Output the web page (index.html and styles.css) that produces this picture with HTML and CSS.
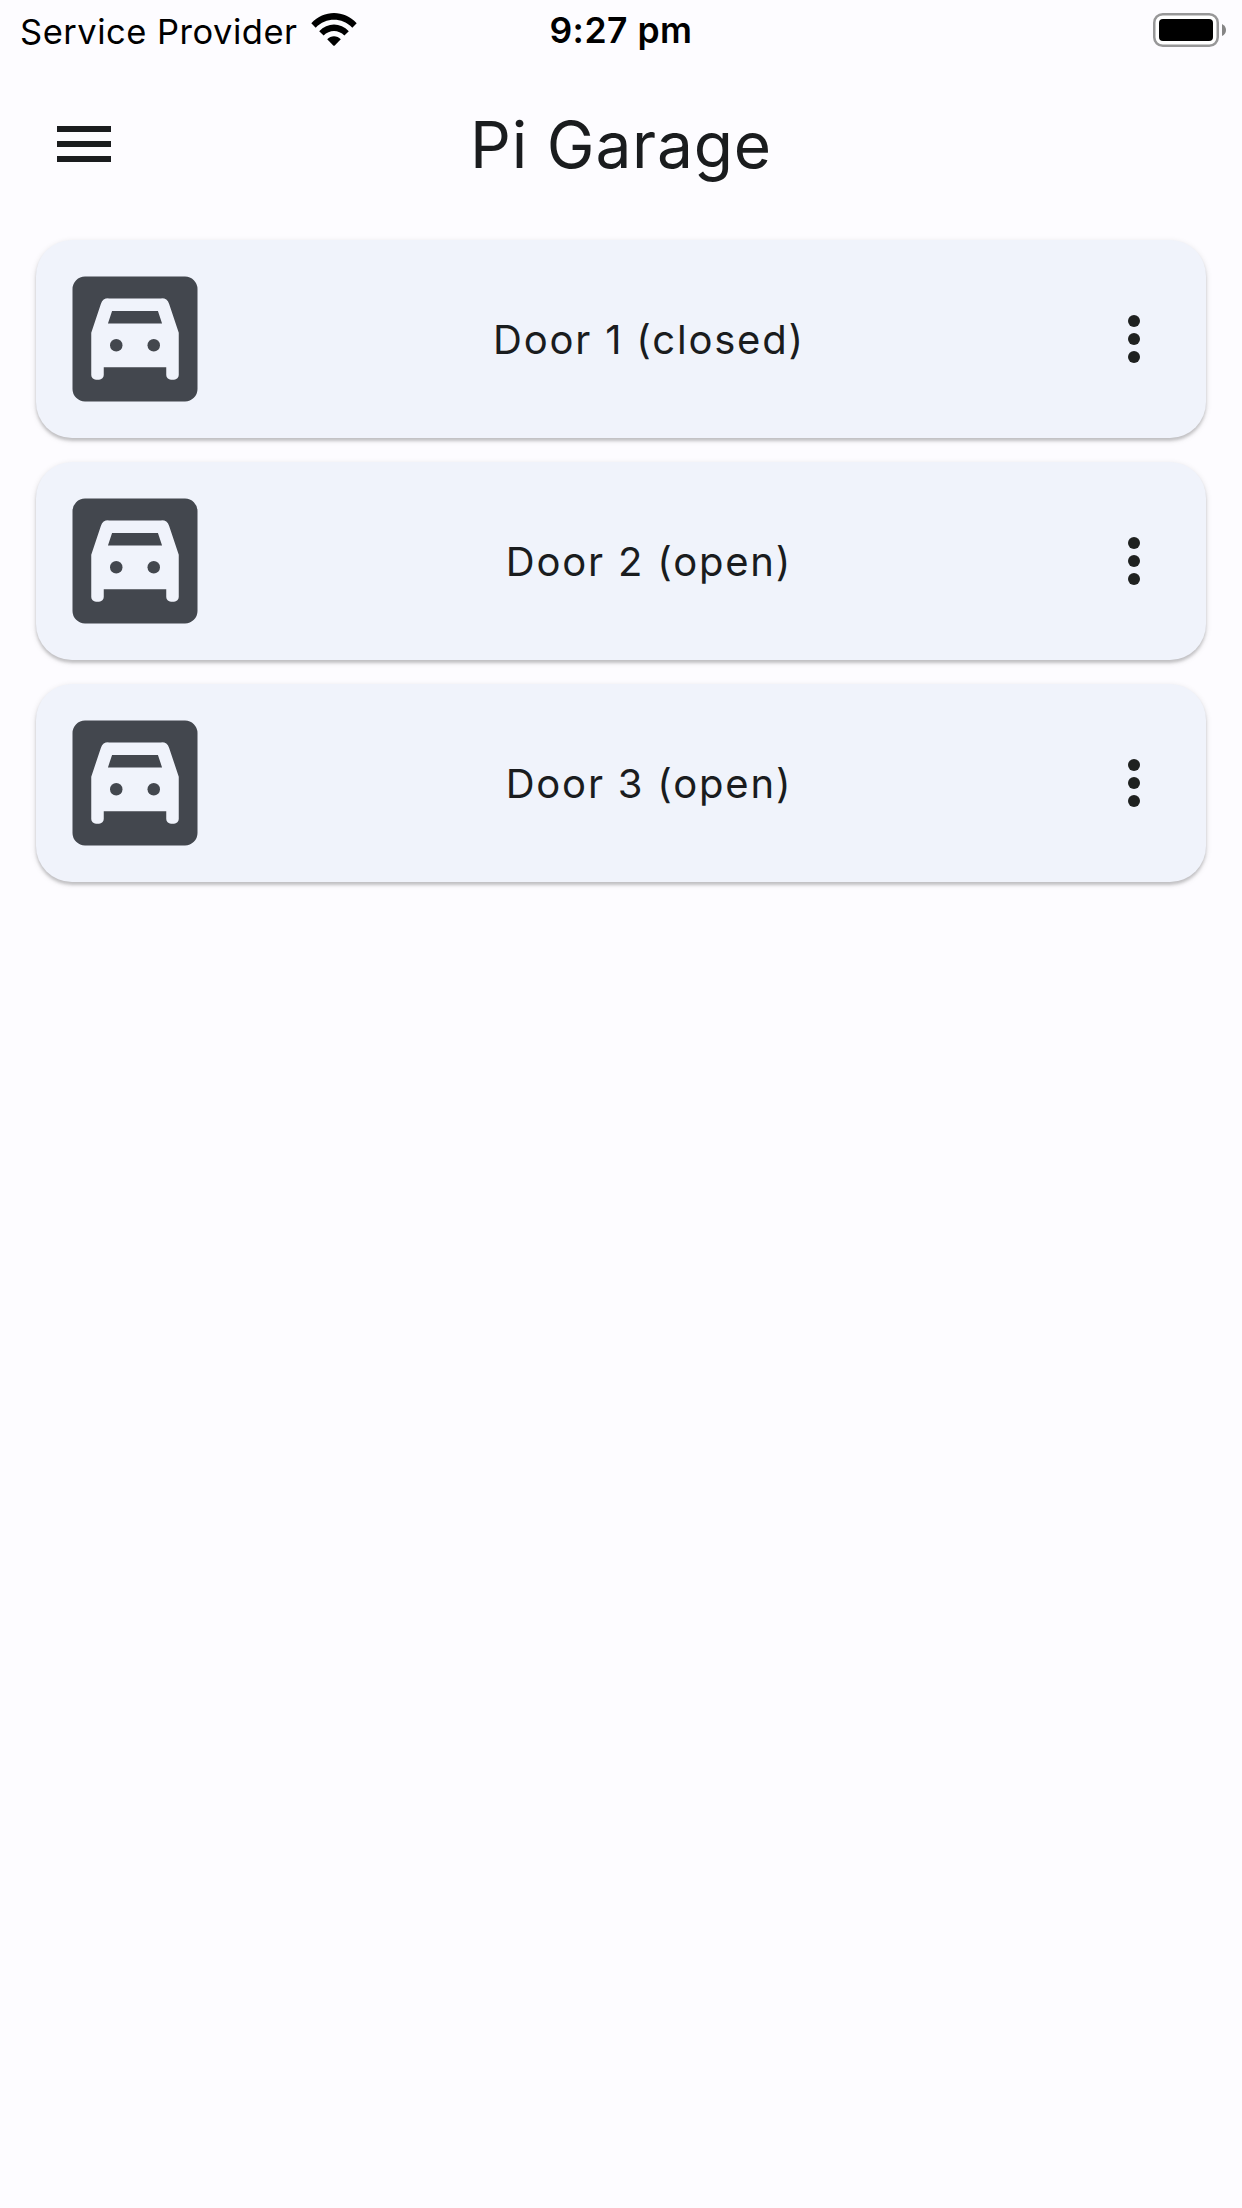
FILE: index.html
```html
<!DOCTYPE html>
<html lang="en">
<head>
<meta charset="utf-8">
<title>Pi Garage</title>
<link rel="stylesheet" href="styles.css">
</head>
<body>
<svg class="defs" width="0" height="0" aria-hidden="true">
  <symbol id="garage" viewBox="0 0 24 24">
    <path fill-rule="evenodd" d="M4 2H20a2 2 0 0 1 2 2V20a2 2 0 0 1-2 2H4a2 2 0 0 1-2-2V4a2 2 0 0 1 2-2ZM5 11V17.750a.75.75 0 0 0 .75.75h.5a.75.75 0 0 0 .75-.75V16.500H17v1.250a.75.75 0 0 0 .75.75h.5a.75.75 0 0 0 .75-.75V11L17.450 6.340A1.250 1.250 0 0 0 16.250 5.500H7.750A1.250 1.250 0 0 0 6.550 6.340ZM8.330 7.500H15.670L16.330 9.500H7.670Z"/>
    <circle cx="9" cy="13" r="1"/>
    <circle cx="15" cy="13" r="1"/>
  </symbol>
  <symbol id="more" viewBox="0 0 24 24">
    <circle cx="12" cy="6" r="2"/><circle cx="12" cy="12" r="2"/><circle cx="12" cy="18" r="2"/>
  </symbol>
</svg>
<div class="status">
  <div class="carrier">
    <span class="carrier-name">Service Provider</span>
    <svg class="wifi" width="46" height="34" viewBox="0 0 46 34">
      <path d="M0.300 10.300C13 -3.400 33 -3.400 45.700 10.300L41.300 14.700C31 4.200 15 4.200 4.700 14.700Z"/>
      <path d="M8.200 18.200C16.500 9.300 29.500 9.300 37.800 18.200L33.400 22.500C27.500 16.400 18.500 16.400 12.600 22.500Z"/>
      <path d="M16.200 26.300C20 22.300 26 22.300 29.800 26.300L24 32.200Q23 33.200 22 32.200Z"/>
    </svg>
  </div>
  <span class="time">9:27 pm</span>
  <svg class="battery" width="74" height="34" viewBox="0 0 74 34">
    <rect x="1.250" y="1.250" width="63.500" height="31.500" rx="8.500" fill="#fff" stroke="#979798" stroke-width="2.500"/>
    <rect x="6" y="6" width="54" height="22" rx="4"/>
    <path fill="#858585" d="M69 11Q73 13 73 17T69 23Z"/>
  </svg>
</div>
<header class="appbar">
  <svg class="menu" width="54" height="36" viewBox="0 0 54 36"><path d="M0 0H54V6H0ZM0 15H54V21H0ZM0 30H54V36H0Z"/></svg>
  <h1 class="title">Pi Garage</h1>
</header>
<main class="doors">
  <section class="card">
    <svg class="garage"><use href="#garage"/></svg>
    <span class="label">Door 1 (closed)</span>
    <svg class="more"><use href="#more"/></svg>
  </section>
  <section class="card">
    <svg class="garage"><use href="#garage"/></svg>
    <span class="label">Door 2 (open)</span>
    <svg class="more"><use href="#more"/></svg>
  </section>
  <section class="card">
    <svg class="garage"><use href="#garage"/></svg>
    <span class="label">Door 3 (open)</span>
    <svg class="more"><use href="#more"/></svg>
  </section>
</main>
</body>
</html>
```
FILE: styles.css
```css
* { box-sizing: border-box; }
body {
  margin: 0;
  min-height: 2208px;
  background: #fdfcff;
  color: #1a1c1e;
  font-family: Inter, "Liberation Sans", sans-serif;
}
svg { display: block; flex: none; }
.defs { position: absolute; }
.status {
  height: 60px;
  padding: 0 20px;
  display: grid;
  grid-template-columns: 1fr auto 1fr;
  grid-template-rows: 60px;
  align-items: center;
  color: #000;
  font-size: 34.500px;
  line-height: 40px;
  white-space: nowrap;
}
.carrier { display: flex; align-items: center; }
.carrier-name { width: 291px; padding-top: 3px; letter-spacing: 0.500px; }
.wifi { margin-bottom: 1px; }
.time { padding-top: 2px; font-size: 35.500px; font-weight: 600; letter-spacing: 0.500px; }
.battery { justify-self: end; margin-right: -5px; }
.appbar {
  height: 168px;
  padding: 0 57px;
  display: grid;
  grid-template-columns: 54px 1fr 54px;
  align-items: center;
}
.menu { fill: #1a1c1e; }
.title {
  margin: 0;
  padding-top: 1px;
  text-align: center;
  font-size: 64px;
  font-weight: 400;
  line-height: 84px;
  letter-spacing: 0.800px;
}
.doors {
  padding: 12px 36px;
  display: flex;
  flex-direction: column;
  gap: 24px;
}
.card {
  height: 198px;
  padding: 0 36px 0 24px;
  display: flex;
  align-items: center;
  border-radius: 36px;
  background: #f0f3fb;
  box-shadow: 0 3px 3px rgba(0, 0, 0, 0.160), 0 2px 6px rgba(0, 0, 0, 0.130);
}
.garage { width: 150px; height: 150px; fill: #43474e; }
.label {
  flex: 1;
  padding-right: 10px;
  text-align: center;
  font-size: 40px;
  letter-spacing: 1.800px;
}
.more { width: 72px; height: 72px; fill: #1f2120; }
```
